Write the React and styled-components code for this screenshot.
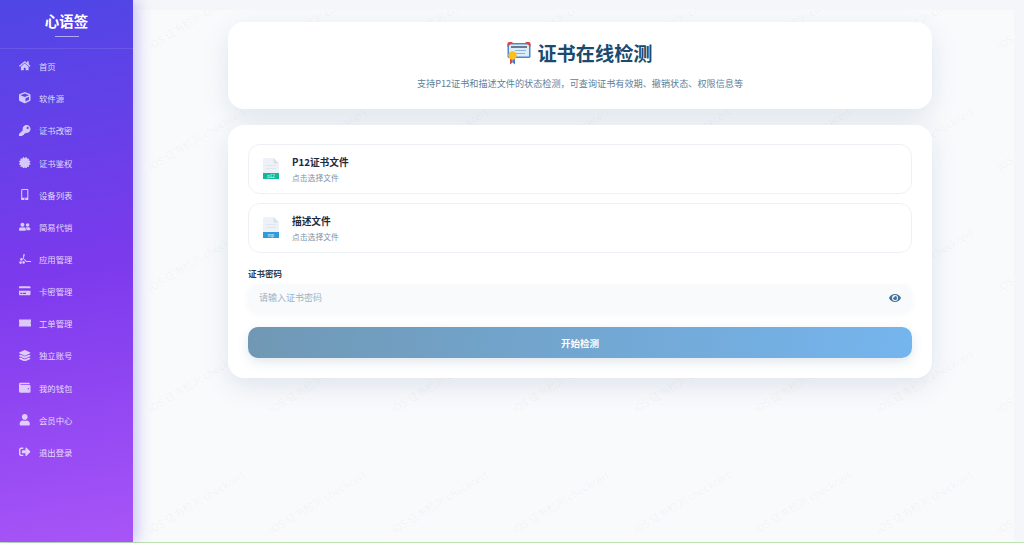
import React from 'react';
import styled, { createGlobalStyle } from 'styled-components';
import {
  FaHome, FaCube, FaKey, FaCertificate, FaMobileAlt, FaUserFriends, FaCreditCard,
  FaLayerGroup, FaWallet, FaUser, FaSignOutAlt, FaEye,
} from 'react-icons/fa';

const AppsIcon = () => (
  <svg width="12" height="12" viewBox="0 0 12 12" fill="currentColor">
    <path d="M4.4 1 L6 1.6 L4.6 5.2 L7.6 8 L12 8 L12 9 L7.2 9 L3.8 5.6 Z" />
    <circle cx="2.4" cy="6.4" r="1.3" />
    <circle cx="1.6" cy="9.6" r="1.3" />
    <circle cx="4.6" cy="9.4" r="1.3" />
  </svg>
);

const TicketIcon = () => (
  <svg width="12" height="12" viewBox="0 0 12 12" fill="currentColor">
    <path d="M0 2.5 L12 2.5 L12 5 Q11 6 12 7 L12 9.5 L0 9.5 L0 7 Q1 6 0 5 Z" />
  </svg>
);

const menuItems = [
  { label: '首页', icon: FaHome },
  { label: '软件源', icon: FaCube },
  { label: '证书改密', icon: FaKey },
  { label: '证书鉴权', icon: FaCertificate },
  { label: '设备列表', icon: FaMobileAlt },
  { label: '简易代销', icon: FaUserFriends },
  { label: '应用管理', icon: AppsIcon },
  { label: '卡密管理', icon: FaCreditCard },
  { label: '工单管理', icon: TicketIcon },
  { label: '独立账号', icon: FaLayerGroup },
  { label: '我的钱包', icon: FaWallet },
  { label: '会员中心', icon: FaUser },
  { label: '退出登录', icon: FaSignOutAlt },
];

const CertIcon = () => (
  <svg width="24" height="24" viewBox="0 0 24 24">
    <rect x="0.5" y="2" width="23" height="15" rx="1.5" fill="#4a86d8" />
    <rect x="2" y="3.5" width="20" height="12" fill="#dcecf8" />
    <path d="M0.5 6 L0.5 3 Q0.5 1 2 1 L6 1 Z" fill="#d9483f" />
    <path d="M23.5 6 L23.5 3 Q23.5 1 22 1 L18 1 Z" fill="#d9483f" />
    <rect x="4" y="5" width="16" height="2" fill="#6d7a88" />
    <rect x="8" y="9" width="11" height="1" fill="#8fb4d4" />
    <rect x="9" y="12" width="9" height="1" fill="#8fb4d4" />
    <path d="M3 17 L3 23.5 L5.5 21.5 L5.5 17 Z" fill="#d9483f" />
    <path d="M5.5 17 L5.5 21.5 L8 23.5 L8 17 Z" fill="#3f7fd6" />
    <circle cx="5.5" cy="14.5" r="4.2" fill="#fbbf24" />
  </svg>
);

const FileIcon = ({ color, ext }) => (
  <svg width="16" height="22" viewBox="0 0 16 22">
    <path d="M0 1.5 Q0 0 1.5 0 L10.5 0 L16 5.5 L16 20 L0 20 Z" fill="#eef2f8" />
    <path d="M10.5 0 L16 5.5 L10.5 5.5 Z" fill="#d8e0ea" />
    <rect x="3" y="7" width="10" height="1" fill="#dfe6ef" />
    <rect x="3" y="10" width="10" height="1" fill="#dfe6ef" />
    <rect y="15" width="16" height="6" fill={color} />
    <text x="8" y="19.8" fontSize="4.5" fill="#e8f6f4" textAnchor="middle" fontFamily="Liberation Sans, sans-serif">{ext}</text>
  </svg>
);

const App = () => (
  <>
    <GlobalStyle />
    <Shell>
      <Sidebar>
        <Brand>
          <BrandName>心语签</BrandName>
          <BrandRule />
        </Brand>
        <Menu>
          {menuItems.map(({ label, icon: Icon }) => (
            <MenuItem key={label}>
              <MenuIcon><Icon /></MenuIcon>
              {label}
            </MenuItem>
          ))}
        </Menu>
      </Sidebar>
      <Main>
        <Content>
          <Watermarks>
            {Array.from({ length: 40 }).map((_, i) => (
              <WatermarkCell key={i}><WatermarkText>iOS 证书检测 checkcert</WatermarkText></WatermarkCell>
            ))}
          </Watermarks>
          <Column>
            <HeaderCard>
              <Title><CertIcon />证书在线检测</Title>
              <Subtitle>支持P12证书和描述文件的状态检测，可查询证书有效期、撤销状态、权限信息等</Subtitle>
            </HeaderCard>
            <FormCard>
              <FileRow>
                <FileIcon color="#10b99a" ext="p12" />
                <FileText>
                  <FileName>P12证书文件</FileName>
                  <FileHint>点击选择文件</FileHint>
                </FileText>
              </FileRow>
              <FileRow>
                <FileIcon color="#2f9bdc" ext="mp" />
                <FileText>
                  <FileName>描述文件</FileName>
                  <FileHint>点击选择文件</FileHint>
                </FileText>
              </FileRow>
              <PasswordLabel>证书密码</PasswordLabel>
              <PasswordBox>
                <PasswordInput placeholder="请输入证书密码" type="password" />
                <EyeIcon><FaEye /></EyeIcon>
              </PasswordBox>
              <SubmitButton>开始检测</SubmitButton>
            </FormCard>
          </Column>
        </Content>
      </Main>
    </Shell>
  </>
);

const GlobalStyle = createGlobalStyle`
  html, body {
    margin: 0;
    padding: 0;
    height: 543px;
    overflow: hidden;
    background: #bfe3ae;
    font-family: "Noto Sans CJK SC", "Noto Sans", sans-serif;
  }
  * {
    box-sizing: border-box;
  }
`;

const Shell = styled.div`
  display: flex;
  height: 542px;
  width: 1024px;
`;

const Sidebar = styled.aside`
  position: relative;
  z-index: 2;
  width: 133px;
  flex-shrink: 0;
  background: linear-gradient(170deg, #4f46e5 0%, #7c3aed 50%, #a855f7 100%);
  box-shadow: 4px 0 14px rgba(79, 70, 229, 0.3);
`;

const Brand = styled.div`
  height: 49px;
  display: flex;
  flex-direction: column;
  align-items: center;
  padding-top: 10px;
  border-bottom: 1px solid rgba(255, 255, 255, 0.1);
`;

const BrandName = styled.div`
  font-size: 14.5px;
  line-height: 22px;
  font-weight: 700;
  color: #fff;
`;

const BrandRule = styled.div`
  width: 24px;
  height: 1px;
  margin-top: 4px;
  background: rgba(255, 255, 255, 0.55);
`;

const Menu = styled.nav`
  display: flex;
  flex-direction: column;
  padding-top: 1px;
`;

const MenuItem = styled.a`
  display: flex;
  align-items: center;
  height: 32.17px;
  padding-left: 19px;
  font-size: 8.4px;
  color: rgba(255, 255, 255, 0.8);
`;

const MenuIcon = styled.span`
  display: flex;
  justify-content: center;
  width: 12px;
  margin-right: 8px;
  font-size: 11.5px;
  color: rgba(255, 255, 255, 0.72);
`;

const Main = styled.main`
  flex: 1;
  padding: 10px 10px 0 0;
  background: #f5f6f9;
`;

const Content = styled.div`
  position: relative;
  height: 100%;
  overflow: hidden;
  background: #f9fafc;
`;

const Watermarks = styled.div`
  position: absolute;
  top: -79px;
  left: 19px;
  display: grid;
  grid-template-columns: repeat(8, 121.3px);
  grid-auto-rows: 121px;
  pointer-events: none;
`;

const WatermarkCell = styled.div`
  position: relative;
`;

const WatermarkText = styled.span`
  position: absolute;
  left: 0;
  bottom: 0;
  font-size: 10.5px;
  line-height: 12px;
  white-space: nowrap;
  color: rgba(60, 70, 90, 0.05);
  transform: rotate(-31deg);
  transform-origin: left bottom;
`;

const Column = styled.div`
  position: relative;
  width: 704px;
  margin-left: 95px;
  padding-top: 12px;
  display: flex;
  flex-direction: column;
  gap: 16px;
`;

const Card = styled.section`
  background: #fff;
  border-radius: 16px;
  box-shadow: 0 8px 26px rgba(50, 90, 130, 0.13);
`;

const HeaderCard = styled(Card)`
  height: 87px;
  display: flex;
  flex-direction: column;
  align-items: center;
  padding-top: 16px;
`;

const Title = styled.h1`
  display: flex;
  align-items: center;
  gap: 6px;
  margin: 0;
  font-size: 19.2px;
  line-height: 30px;
  font-weight: 700;
  color: #1a4a6e;
`;

const Subtitle = styled.p`
  margin: 9px 0 0;
  font-size: 9.13px;
  line-height: 13px;
  color: #5b7f9c;
`;

const FormCard = styled(Card)`
  height: 253px;
  padding: 19px 20px;
  display: flex;
  flex-direction: column;
`;

const FileRow = styled.div`
  display: flex;
  align-items: center;
  gap: 13px;
  height: 50px;
  margin-bottom: 9px;
  padding-left: 14px;
  background: #fff;
  border: 1px solid #edf1f5;
  border-radius: 12px;
`;

const FileText = styled.div`
  display: flex;
  flex-direction: column;
  gap: 3px;
`;

const FileName = styled.div`
  font-size: 9.7px;
  line-height: 14px;
  font-weight: 700;
  color: #1e293b;
`;

const FileHint = styled.div`
  font-size: 7.8px;
  line-height: 12px;
  color: #7b93a8;
`;

const PasswordLabel = styled.label`
  margin-top: 5px;
  font-size: 8.5px;
  line-height: 12px;
  font-weight: 700;
  color: #2c3e50;
`;

const PasswordBox = styled.div`
  display: flex;
  align-items: center;
  height: 28px;
  margin-top: 5px;
  padding: 0 11px;
  background: #f8fafc;
  border-radius: 10px;
  box-shadow: 0 2px 6px rgba(50, 90, 130, 0.05);
`;

const PasswordInput = styled.input`
  flex: 1;
  border: none;
  outline: none;
  padding: 0 0 2px;
  background: transparent;
  font-family: inherit;
  font-size: 9px;
  color: #1e293b;
  &::placeholder {
    color: #a0b4c4;
    opacity: 1;
  }
`;

const EyeIcon = styled.span`
  display: flex;
  font-size: 12px;
  color: #3f729b;
`;

const SubmitButton = styled.button`
  height: 31px;
  margin-top: 15px;
  border: none;
  border-radius: 10px;
  background: linear-gradient(100deg, #7098b4 0%, #75b5ee 100%);
  box-shadow: 0 4px 12px rgba(50, 90, 130, 0.14);
  font-family: inherit;
  font-size: 9.5px;
  font-weight: 700;
  color: #fff;
`;

export default App;
